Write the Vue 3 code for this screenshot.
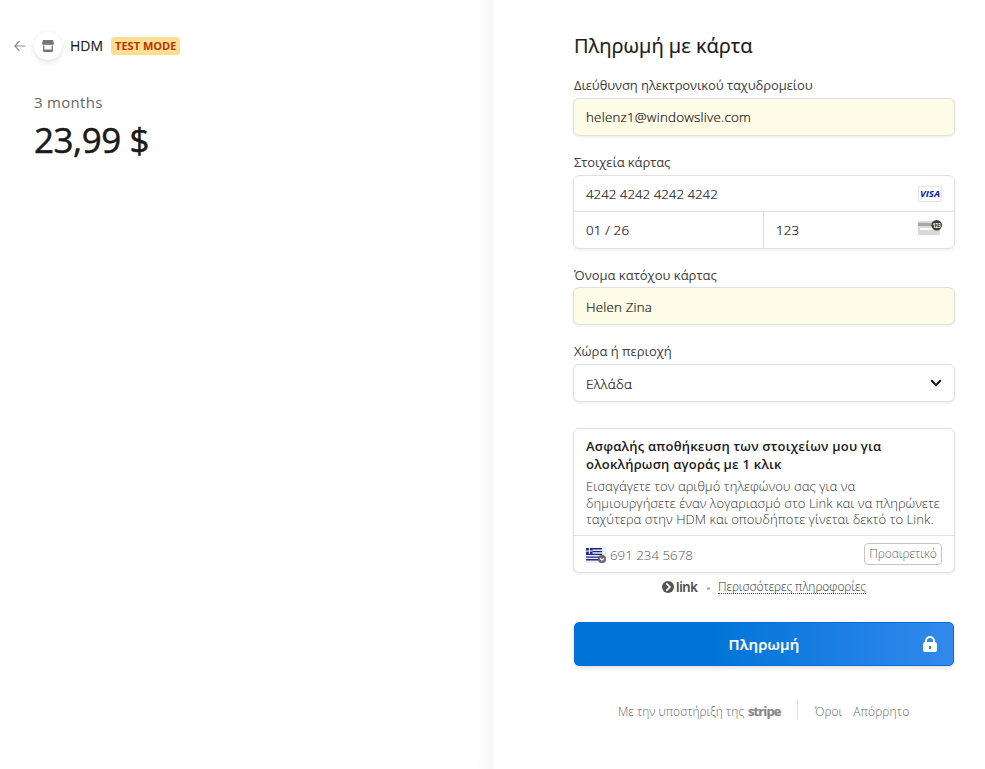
<script setup>
const legal = ['Όροι', 'Απόρρητο']
</script>

<template>
  <main class="checkout">
    <section class="summary">
      <header class="brand">
        <svg class="back" width="12" height="12" viewBox="0 0 12 12"><path d="M11.500 6H1M5.500 1.200 .8 6l4.700 4.800" /></svg>
        <span class="avatar">
          <svg width="12" height="12" viewBox="0 0 12 12"><path d="M1 0h10l1 3.200c0 1-.7 1.700-1.500 1.700S9 4.400 9 4.400s-.6.500-1.500.5S6 4.400 6 4.400s-.6.500-1.500.5S3 4.400 3 4.400s-.6.500-1.500.5S0 4.200 0 3.200z" /><path d="M1 5.500h1.300v4.100h7.400V5.500H11V11a1 1 0 0 1-1 1H2a1 1 0 0 1-1-1z" /></svg>
        </span>
        <span class="name">HDM</span>
        <span class="badge">TEST MODE</span>
      </header>
      <div class="product">3 months</div>
      <div class="price">23,99 $</div>
    </section>

    <section class="payment">
      <h1>Πληρωμή με κάρτα</h1>

      <label class="tight">Διεύθυνση ηλεκτρονικού ταχυδρομείου</label>
      <div class="field filled email">helenz1@windowslive.com</div>

      <label class="tight">Στοιχεία κάρτας</label>
      <div class="card-box">
        <div class="row number">
          <span>4242 4242 4242 4242</span>
          <svg class="visa" width="24" height="16" viewBox="0 0 24 16"><rect x=".5" y=".5" width="23" height="15" /><text x="2" y="11.300" textLength="20" lengthAdjust="spacingAndGlyphs">VISA</text></svg>
        </div>
        <div class="row">
          <div class="half">01 / 26</div>
          <div class="half">
            <span>123</span>
            <svg class="cvc" width="24" height="16" viewBox="0 0 24 16"><path d="M0 1h22v13a1 1 0 0 1-1 1H1a1 1 0 0 1-1-1z" fill="#d9d9d9" /><path d="M0 3h16v3H0z" fill="#a8a8a8" /><path d="M2 8h14v2H2z" fill="#fff" /><circle cx="18.700" cy="5.200" r="5.300" fill="#3c3c3c" /><text x="14.700" y="7.900" textLength="8" lengthAdjust="spacingAndGlyphs">123</text></svg>
          </div>
        </div>
      </div>

      <label class="holder-label">Όνομα κατόχου κάρτας</label>
      <div class="field filled holder">Helen Zina</div>

      <label>Χώρα ή περιοχή</label>
      <div class="field select">
        <span>Ελλάδα</span>
        <svg width="12" height="8" viewBox="0 0 12 8"><path d="m1.200 1.200 4.800 4.900 4.800-4.900" /></svg>
      </div>

      <div class="link-box">
        <div class="link-copy">
          <h2>Ασφαλής αποθήκευση των στοιχείων μου για<br>ολοκλήρωση αγοράς με 1 κλικ</h2>
          <p>Εισαγάγετε τον αριθμό τηλεφώνου σας για να<br>δημιουργήσετε έναν λογαριασμό στο Link και να πληρώνετε<br>ταχύτερα στην HDM και οπουδήποτε γίνεται δεκτό το Link.</p>
        </div>
        <div class="phone">
          <svg width="20" height="16" viewBox="0 0 20 16"><path fill="#e6edfb" d="M0 0h20v16H0z" /><path fill="#25258a" d="M0 1h16v1.500H0zM0 4h16v1.300H0zM0 6.700h16V8H0zM0 9.400h16v1.300H0zM0 12.100h16v1.500H0zM0 1h6.500v6H0z" /><path d="M3.300 1v6M0 4h6.500" stroke="#fff" /><circle cx="16" cy="12" r="4" fill="#666" /><path d="m14 11.300 2 1.900 2-1.900" fill="none" stroke="#fff" stroke-width="1.200" /></svg>
          <span class="number-hint">691 234 5678</span>
          <span class="optional">Προαιρετικό</span>
        </div>
      </div>

      <div class="link-more">
        <svg width="12" height="12" viewBox="0 0 12 12"><circle cx="6" cy="6" r="6" fill="#555" /><path d="M4.300 2.400 7.900 6 4.300 9.600" fill="none" stroke="#fff" stroke-width="1.700" /><path d="M2.200 6h3.200" stroke="#555" stroke-width="1.500" /></svg>
        <b>link</b>
        <i></i>
        <u>Περισσότερες πληροφορίες</u>
      </div>

      <button type="button">
        <span>Πληρωμή</span>
        <svg width="14" height="16" viewBox="0 0 14 16"><path fill="#fff" fill-rule="evenodd" d="M2 6V5a5 5 0 0 1 10 0v1a2 2 0 0 1 2 2v6a2 2 0 0 1-2 2H2a2 2 0 0 1-2-2V8a2 2 0 0 1 2-2zm2 0h6V5a3 3 0 0 0-6 0zm2 4v3h2v-3z" /></svg>
      </button>

      <footer>
        <span>Με την υποστήριξη της</span>
        <b>stripe</b>
        <hr>
        <a v-for="item in legal" :key="item">{{ item }}</a>
      </footer>
    </section>
  </main>
</template>

<style>
body { margin: 0; background: #fff; overflow: hidden; }
</style>

<style scoped>
* { box-sizing: border-box; }
.checkout { display: flex; height: 769px; font-family: "Open Sans", "Noto Sans", sans-serif; color: #1a1a1a; font-size: 13px; white-space: nowrap; }
.summary { width: 494px; padding: 32px 0 0 14px; background: linear-gradient(to left, #f8f8f8, #fff 18px); }
.brand { display: flex; align-items: center; height: 28px; }
.back { fill: none; stroke: #8d8d8d; stroke-width: 1.200; }
.avatar { display: flex; align-items: center; justify-content: center; width: 28px; height: 28px; margin: 0 8px; border-radius: 50%; box-shadow: 0 2px 5px rgba(0, 0, 0, .12); fill: #757575; background: #fff; }
.name { font-size: 14px; line-height: 18px; margin-top: -1px; -webkit-text-stroke: .15px #1a1a1a; }
.badge { height: 18px; margin-left: 8px; padding: 0 4px; border-radius: 4px; background: #ffde92; color: #b13600; font-size: 11px; font-weight: 700; line-height: 18px; }
.product { margin: 32px 0 0 20px; font-size: 15px; line-height: 20px; letter-spacing: .3px; color: #666; }
.price { margin: 3px 0 0 20px; font-size: 35px; line-height: 50px; letter-spacing: -.45px; -webkit-text-stroke: .5px #1a1a1a; }
.payment { width: 382px; margin-left: 79px; padding-top: 32px; }
h1 { margin: 0 0 0 1px; font-size: 20px; font-weight: 400; line-height: 28px; -webkit-text-stroke: .2px #1a1a1a; }
label { display: block; height: 26px; margin-top: 13px; padding-left: 1px; font-size: 13px; line-height: 26px; color: #404040; }
.tight { letter-spacing: -.1px; }
h1 + label { margin-top: 12px; }
.holder-label { height: 25px; }
.field { display: flex; align-items: center; height: 38px; padding: 0 12px; border: 1px solid #e0e0e0; border-radius: 6px; box-shadow: 0 1px 3px rgba(0, 0, 0, .08); background: #fff; font-size: 13.300px; font-weight: 300; -webkit-text-stroke: .2px #111; }
.filled { background: #fefbe6; }
.email { letter-spacing: .25px; }
.holder { padding-top: 2px; letter-spacing: .2px; }
.card-box { height: 74px; border: 1px solid #e0e0e0; border-radius: 6px; box-shadow: 0 1px 3px rgba(0, 0, 0, .08); font-size: 13.300px; font-weight: 300; }
.row { display: flex; height: 36px; }
.number, .half { -webkit-text-stroke: .2px #111; }
.number { align-items: center; justify-content: space-between; padding: 0 12px; border-bottom: 1px solid #e0e0e0; }
.half { display: flex; align-items: center; justify-content: space-between; width: 189px; padding: 0 12px; letter-spacing: .2px; }
.half + .half { width: 191px; border-left: 1px solid #e0e0e0; }
.visa rect { fill: #fff; stroke: #e6e6e6; }
.visa text { fill: #0a16c8; font: italic 700 9.500px "Open Sans", sans-serif; -webkit-text-stroke: 0; }
.cvc { margin-bottom: 5px; overflow: visible; letter-spacing: 0; }
.cvc text { fill: #fff; font: 700 7.500px "Open Sans", sans-serif; -webkit-text-stroke: 0; }
.select { justify-content: space-between; letter-spacing: .35px; }
.select span { padding-top: 1px; }
.select svg { fill: none; stroke: #111; stroke-width: 2; -webkit-text-stroke: 0; }
.link-box { height: 145px; margin-top: 26px; border: 1px solid #e0e0e0; border-radius: 6px; box-shadow: 0 1px 3px rgba(0, 0, 0, .08); }
.link-copy { height: 107px; padding: 8px 12px; border-bottom: 1px solid #e0e0e0; }
h2 { margin: 0; font-size: 13px; font-weight: 600; line-height: 18px; letter-spacing: .2px; }
p { margin: 5px 0 0; font-size: 13px; font-weight: 300; line-height: 16.500px; letter-spacing: .06px; color: #333; }
.phone { display: flex; align-items: center; height: 37px; padding: 0 12px; }
.number-hint { margin-left: 4px; font-size: 13.300px; font-weight: 300; color: #555; }
.optional { width: 78px; height: 22px; margin: -2px 0 0 auto; border: 1px solid #c4c4c4; border-radius: 4px; font-size: 12px; font-weight: 300; line-height: 19px; text-align: center; color: #666; }
.link-more { display: flex; align-items: center; height: 20px; margin: 4px 0 0 89px; }
.link-more b { width: 22px; margin-left: 2px; font: 600 13.500px/18px Inter, sans-serif; letter-spacing: -.4px; color: #505050; }
.link-more i { width: 3px; height: 3px; margin: 2px 8px 0 9px; border-radius: 50%; background: #aaa; }
.link-more u { text-decoration: none; border-bottom: 1px dotted #444; font-size: 12px; font-weight: 300; line-height: 13px; letter-spacing: -.06px; color: #333; }
button { display: flex; align-items: center; justify-content: center; position: relative; width: 380px; height: 44px; margin: 25px 0 0 1px; border: 1px solid #0a6cdb; border-radius: 5px; background: linear-gradient(90deg, #0074d8 35%, #3289ec); box-shadow: 0 2px 4px rgba(0, 0, 0, .13); color: #fff; font: 600 15px "Open Sans", sans-serif; letter-spacing: .2px; -webkit-text-stroke: .2px #fff; }
button span { margin-top: -1px; }
button svg { position: absolute; right: 16px; }
footer { display: flex; align-items: center; height: 24px; margin: 33px 0 0 45px; font-size: 12px; font-weight: 300; color: #666; }
footer span { width: 126px; }
footer b { width: 34px; margin-left: 4px; font: 700 13px/20px "Open Sans", sans-serif; letter-spacing: -.9px; color: #888; -webkit-text-stroke: .2px #888; }
hr { width: 1px; height: 22px; margin: -5px 16px 0 15px; border: 0; background: #e3e3e3; }
a { margin-left: 1px; }
a + a { margin-left: 11px; letter-spacing: .15px; }
</style>
